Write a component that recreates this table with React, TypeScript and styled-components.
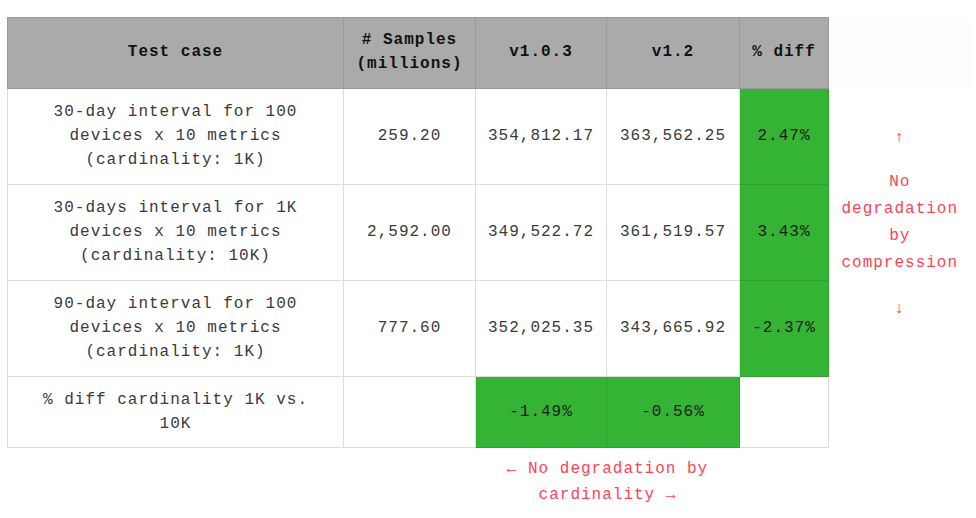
import React from "react";
import styled, { createGlobalStyle } from "styled-components";

const GlobalStyle = createGlobalStyle`
	body {
		margin: 0;
		background: #ffffff;
		font-family: "Liberation Mono", "Courier New", monospace;
	}
`;

interface Row {
	label: string[];
	samples: string;
	v103: string;
	v12: string;
	diff: string;
}

const rows: Row[] = [
	{
		label: ["30-day interval for 100", "devices x 10 metrics", "(cardinality: 1K)"],
		samples: "259.20",
		v103: "354,812.17",
		v12: "363,562.25",
		diff: "2.47%",
	},
	{
		label: ["30-days interval for 1K", "devices x 10 metrics", "(cardinality: 10K)"],
		samples: "2,592.00",
		v103: "349,522.72",
		v12: "361,519.57",
		diff: "3.43%",
	},
	{
		label: ["90-day interval for 100", "devices x 10 metrics", "(cardinality: 1K)"],
		samples: "777.60",
		v103: "352,025.35",
		v12: "343,665.92",
		diff: "-2.37%",
	},
];

const App: React.FC = () => {
	return (
		<>
			<GlobalStyle />
			<Page>
				<Table>
					<colgroup>
						<col style={{ width: 336 }} />
						<col style={{ width: 132 }} />
						<col style={{ width: 131 }} />
						<col style={{ width: 133 }} />
						<col style={{ width: 89 }} />
						<col style={{ width: 142 }} />
					</colgroup>
					<thead>
						<tr>
							<HeadCell>Test case</HeadCell>
							<HeadCell>
								# Samples
								<br />
								(millions)
							</HeadCell>
							<HeadCell>v1.0.3</HeadCell>
							<HeadCell>v1.2</HeadCell>
							<HeadCell>% diff</HeadCell>
							<BlankHead />
						</tr>
					</thead>
					<tbody>
						{rows.map((r, i) => (
							<tr key={i}>
								<Cell>
									{r.label.map((l, j) => (
										<Line key={j}>{l}</Line>
									))}
								</Cell>
								<Cell>{r.samples}</Cell>
								<Cell>{r.v103}</Cell>
								<Cell>{r.v12}</Cell>
								<Cell $good>{r.diff}</Cell>
								{i === 0 && (
									<NoteCell rowSpan={3}>
										<Arrow $top>↑</Arrow>
										<NoteLine>No</NoteLine>
										<NoteLine>degradation</NoteLine>
										<NoteLine>by</NoteLine>
										<NoteLine>compression</NoteLine>
										<Arrow>↓</Arrow>
									</NoteCell>
								)}
							</tr>
						))}
						<tr>
							<Cell $short>
								<Line>% diff cardinality 1K vs.</Line>
								<Line>10K</Line>
							</Cell>
							<Cell $short />
							<Cell $short $good>-1.49%</Cell>
							<Cell $short $good>-0.56%</Cell>
							<Cell $short />
							<FootCell />
						</tr>
					</tbody>
					<tfoot>
						<tr>
							<FootCell colSpan={2} />
							<BottomNote colSpan={2}>
								<NoteLine $tight>← No degradation by</NoteLine>
								<NoteLine $tight>cardinality →</NoteLine>
							</BottomNote>
							<FootCell colSpan={2} />
						</tr>
					</tfoot>
				</Table>
			</Page>
		</>
	);
};

const Page = styled.div`
	padding: 17px 0 0 7px;
`;

const Table = styled.table`
	border-collapse: collapse;
	table-layout: fixed;
	width: 963px;
	font-size: 16px;
	letter-spacing: 1px;
	line-height: 24px;
`;

const HeadCell = styled.th`
	background: #aaaaaa;
	border: 1px solid #999999;
	color: #111111;
	font-weight: bold;
	text-align: center;
	vertical-align: middle;
	padding: 10px 4px 12px;
	height: 70px;
	box-sizing: border-box;
`;

const BlankHead = styled.th`
	background: #fdfdfd;
	border: none;
`;

const Cell = styled.td<{ $good?: boolean; $short?: boolean }>`
	border: 1px solid ${(p) => (p.$good ? "#2ea22d" : "#dddddd")};
	background: ${(p) => (p.$good ? "#35b334" : "#ffffff")};
	color: ${(p) => (p.$good ? "#1a1a1a" : "#3a3a3a")};
	text-align: center;
	vertical-align: middle;
	padding: ${(p) => (p.$short ? "11px 4px" : "11px 4px 12px")};
	white-space: nowrap;
`;

const Line = styled.div`
	line-height: 24px;
`;

const NoteCell = styled.td`
	border: none;
	text-align: center;
	vertical-align: middle;
	color: #ff4355;
	padding: 0 0 17px 0;
`;

const NoteLine = styled.div<{ $tight?: boolean }>`
	line-height: ${(p) => (p.$tight ? "26px" : "27px")};
`;

const Arrow = styled.div<{ $top?: boolean }>`
	line-height: 27px;
	margin: ${(p) => (p.$top ? "0 0 17px" : "19px 0 0")};
`;

const FootCell = styled.td`
	border: none;
`;

const BottomNote = styled.td`
	border: none;
	text-align: center;
	color: #ff4355;
	padding: 8px 0 0;
`;

export default App;
